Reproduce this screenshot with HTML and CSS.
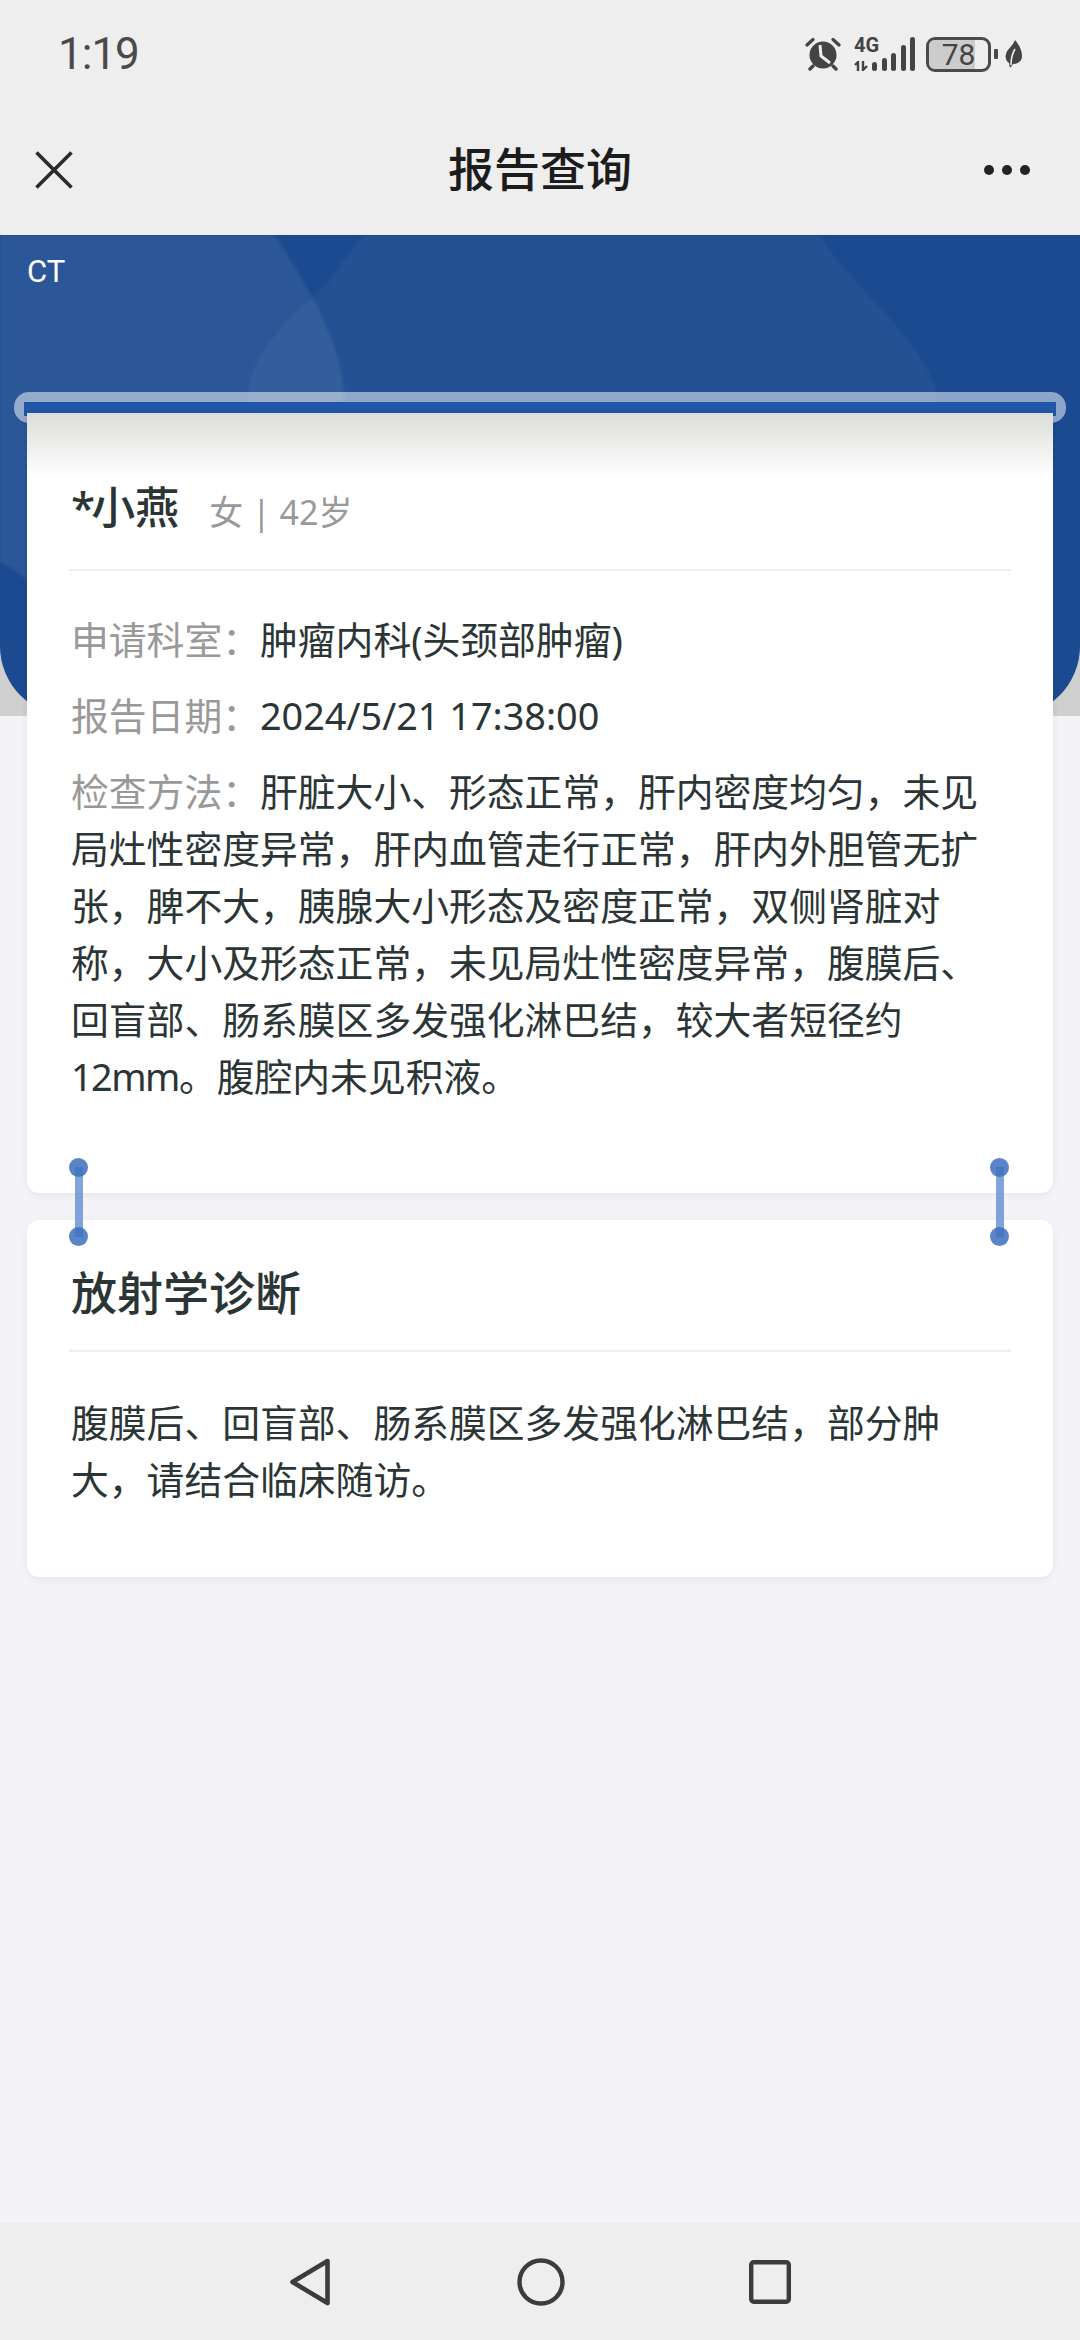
FILE: index.html
```html
<!DOCTYPE html>
<html lang="zh-CN">
<head>
    <meta charset="UTF-8">
    <title>报告查询</title>
    <link rel="stylesheet" href="styles.css">
</head>
<body>
    <div class="status-bar">
        <div class="time">1:19</div>
        <div class="status-icons">
            <svg class="icon-alarm" width="36" height="34" viewBox="0 0 36 34">
                <path d="M2 8 L8 2.5 M34 8 L28 2.5" stroke="#444" stroke-width="3.2" stroke-linecap="round" fill="none"/>
                <circle cx="18" cy="18" r="13.5" fill="#444"/>
                <path d="M8 29 L5 32 M28 29 L31 32" stroke="#444" stroke-width="3.4" stroke-linecap="round"/>
                <path d="M15 8 L16 19 L25 26" stroke="#eee" stroke-width="3" fill="none"/>
            </svg>
            <div class="signal">
                <div class="net">
                    <span class="net-label">4G</span>
                    <svg width="14" height="10" viewBox="0 0 14 10">
                        <path d="M4 10 V1 L1 4 M9 0 V9 L13 5" stroke="#444" stroke-width="2.4" fill="none"/>
                    </svg>
                </div>
                <div class="bars">
                    <i class="bar b1"></i><i class="bar b2"></i><i class="bar b3"></i><i class="bar b4"></i><i class="bar b5"></i>
                </div>
            </div>
            <div class="battery">
                <div class="battery-fill"></div>
                <span class="battery-num">78</span>
            </div>
            <div class="battery-cap"></div>
            <svg class="icon-leaf" width="17" height="28" viewBox="0 0 17 28">
                <path d="M10 0 C15 6 17 11 17 16 C17 21 13 24 8 24 L5 28 L4 23 C1 21 0 18 1 14 C2 9 8 6 10 0 Z" fill="#444"/>
                <path d="M6 25 C6 18 7 14 10 9" stroke="#eee" stroke-width="1.6" fill="none"/>
            </svg>
        </div>
    </div>

    <div class="nav-bar">
        <svg class="nav-close" width="38" height="38" viewBox="0 0 38 38">
            <path d="M1.5 1.5 L36.5 36.5 M36.5 1.5 L1.5 36.5" stroke="#2a2a2a" stroke-width="3.6" fill="none"/>
        </svg>
        <div class="nav-title">报告查询</div>
        <div class="nav-more"><i></i><i></i><i></i></div>
    </div>

    <div class="hero-wrap">
        <div class="hero">
            <!-- 背景上的浅色波浪 -->
            <svg class="hero-bg" width="1080" height="481" viewBox="0 0 1080 481">
                <path d="M0 0 H275 C300 40 340 100 344 157 V345 H27 C15 335 8 330 0 328 Z" fill="#fff" fill-opacity="0.075"/>
                <path d="M248 157 C255 110 290 85 330 45 C340 30 350 15 365 0 H820 C850 50 920 100 937 157 V345 H248 Z" fill="#fff" fill-opacity="0.04"/>
            </svg>
            <div class="hero-label">CT</div>
        </div>
    </div>

    <div class="content">
        <!-- 出纸口 -->
        <div class="slot">
            <div class="slot-inner"></div>
        </div>

        <div class="card card-info">
            <div class="person">
                <span class="person-name"><span class="mask">*</span>小燕</span>
                <span class="person-meta">女 | 42岁</span>
            </div>
            <div class="card-body">
                <div class="row">
                    <span class="label">申请科室：</span>肿瘤内科(头颈部肿瘤)
                </div>
                <div class="row">
                    <span class="label">报告日期：</span>2024/5/21 17:38:00
                </div>
                <div class="row">
                    <span class="label">检查方法：</span>肝脏大小、形态正常，肝内密度均匀，未见局灶性密度异常，肝内血管走行正常，肝内外胆管无扩张，脾不大，胰腺大小形态及密度正常，双侧肾脏对称，大小及形态正常，未见局灶性密度异常，腹膜后、回盲部、肠系膜区多发强化淋巴结，较大者短径约<span class="tight">12mm</span>。腹腔内未见积液。
                </div>
            </div>
        </div>

        <div class="card card-result">
            <i class="link link-left"></i>
            <i class="link link-right"></i>
            <div class="card-title">放射学诊断</div>
            <div class="card-body">
                <div class="row">腹膜后、回盲部、肠系膜区多发强化淋巴结，部分肿大，请结合临床随访。</div>
            </div>
        </div>
    </div>

    <div class="bottom-bar">
        <svg width="44" height="48" viewBox="0 0 44 48">
            <path d="M38.5 3 L3.5 24 L38.5 45 Z" stroke="#3c3c3c" stroke-width="4.6" stroke-linejoin="round" fill="none"/>
        </svg>
        <svg width="48" height="48" viewBox="0 0 48 48">
            <circle cx="24" cy="24" r="21.5" stroke="#3c3c3c" stroke-width="4.4" fill="none"/>
        </svg>
        <svg width="42" height="44" viewBox="0 0 42 44">
            <rect x="2.2" y="2.2" width="37.6" height="39.6" rx="2.5" stroke="#3c3c3c" stroke-width="4.4" fill="none"/>
        </svg>
    </div>
</body>
</html>
```

FILE: styles.css
```css
* {
    box-sizing: border-box;
}
html, body {
    margin: 0;
    height: 2340px;
}
body {
    width: 1080px;
    display: flex;
    flex-direction: column;
    overflow: hidden;
    background-color: #f4f4f8;
    font-family: "Noto Sans", "Noto Sans CJK SC", sans-serif;
    color: #2b3535;
}

.status-bar {
    height: 108px;
    padding: 0 58px;
    display: flex;
    align-items: center;
    justify-content: space-between;
    background-color: #eeeeee;
}
.time {
    font-family: Roboto, sans-serif;
    font-size: 44px;
    letter-spacing: -1px;
    color: #4a4a4a;
}
.status-icons {
    display: flex;
    align-items: center;
}
.icon-alarm {
    margin-right: 13px;
}
.signal {
    display: flex;
    align-items: flex-end;
    height: 34px;
    margin-right: 11px;
}
.net {
    display: flex;
    flex-direction: column;
    justify-content: space-between;
    width: 18px;
    height: 100%;
}
.net-label {
    font-family: Roboto, sans-serif;
    font-weight: 700;
    font-size: 20px;
    line-height: 16px;
    white-space: nowrap;
    color: #444444;
}
.bars {
    display: flex;
    align-items: flex-end;
    gap: 4.5px;
}
.bar {
    display: block;
    width: 5px;
    background-color: #444444;
    border-radius: 3px;
}
.b1 { height: 9px; }
.b2 { height: 13px; }
.b3 { height: 18px; }
.b4 { height: 26px; }
.b5 { height: 34px; }
.battery {
    position: relative;
    width: 65px;
    height: 35px;
    border: 3px solid #4a4a4a;
    border-radius: 9px;
    overflow: hidden;
    display: flex;
    align-items: center;
    justify-content: center;
}
.battery-fill {
    position: absolute;
    left: 0;
    top: 0;
    bottom: 0;
    width: 78%;
    background-color: #cccccc;
}
.battery-num {
    position: relative;
    font-family: Roboto, sans-serif;
    font-size: 30px;
    color: #444444;
}
.battery-cap {
    width: 4px;
    height: 10px;
    margin: 0 7px 0 3px;
    background-color: #4a4a4a;
    border-radius: 1px;
}

.nav-bar {
    height: 127px;
    padding: 0 35px 3px;
    display: grid;
    grid-template-columns: 1fr auto 1fr;
    align-items: center;
    background-color: #eeeeee;
}
.nav-title {
    font-size: 46px;
    line-height: 60px;
    font-weight: 500;
    color: #1c1c1c;
    margin-bottom: 5px;
}
.nav-more {
    justify-self: end;
    margin-right: 15px;
    display: flex;
    gap: 8px;
}
.nav-more i {
    display: block;
    width: 10px;
    height: 10px;
    border-radius: 50%;
    background-color: #222222;
}

.hero-wrap {
    background-color: #cfcfcf;
}
.hero {
    position: relative;
    height: 481px;
    padding: 18px 27px;
    background-color: #1b4a90;
    border-radius: 0 0 70px 70px;
    overflow: hidden;
}
.hero-bg {
    position: absolute;
    left: 0;
    top: 0;
    filter: blur(1.5px);
}
.hero-label {
    position: relative;
    font-family: Roboto, sans-serif;
    font-size: 31px;
    line-height: 38px;
    color: #ffffff;
}

.content {
    position: relative;
    flex: 1;
    margin-top: -303px;
    padding: 0 27px;
}
.slot {
    position: absolute;
    left: 14px;
    right: 14px;
    top: -21px;
    height: 31px;
    background-color: rgba(255,255,255,.5);
    border-radius: 15px;
    padding: 10px 10px 0;
}
.slot-inner {
    height: 14px;
    background-color: #2156a8;
}

.card {
    position: relative;
    background-color: #ffffff;
    border-radius: 0 0 12px 12px;
    padding: 0 44px;
    box-shadow: 0 2px 8px rgba(0,0,0,.06);
}
.card-info {
    height: 780px;
    background-image: linear-gradient(#dcdcda, #ffffff 64px);
    background-repeat: no-repeat;
}
.card-result {
    margin-top: 27px;
    height: 357px;
    border-radius: 12px;
}

.person {
    height: 158px;
    padding: 32px 0 0 2px;
    margin: 0 -2px;
    display: flex;
    align-items: center;
    border-bottom: 2px solid #eeeeee;
}
.person-name {
    font-size: 44px;
    line-height: 50px;
    font-weight: 500;
    margin-right: 30px;
}
.mask {
    margin-right: -4px;
}
.person-meta {
    margin-top: 9px;
    font-size: 34px;
    line-height: 44px;
    color: #999999;
}
.card-title {
    height: 132px;
    padding: 10px 0 0 2px;
    margin: 0 -2px;
    display: flex;
    align-items: center;
    font-size: 46px;
    font-weight: 500;
    border-bottom: 2px solid #eeeeee;
}
.card-body {
    padding-top: 40px;
    font-size: 37.8px;
    line-height: 57px;
}
.card-result .card-body {
    padding-top: 42px;
}
.row {
    margin-bottom: 19px;
}
.label {
    color: #999999;
}
.tight {
    letter-spacing: -1.5px;
}

.link {
    position: absolute;
    top: -53px;
    width: 8px;
    height: 70px;
    background-color: rgba(80,130,205,.72);
}
.link:before,
.link:after {
    content: "";
    position: absolute;
    left: -6px;
    width: 19px;
    height: 19px;
    border-radius: 50%;
    background-color: rgba(60,110,190,.85);
}
.link:before {
    top: -9px;
}
.link:after {
    bottom: -9px;
}
.link-left {
    left: 48px;
}
.link-right {
    right: 49px;
}

.bottom-bar {
    height: 117px;
    display: flex;
    align-items: center;
    justify-content: center;
    background-color: #eeeeee;
}
.bottom-bar svg:nth-child(1),
.bottom-bar svg:nth-child(2) {
    margin-right: 184px;
}
```
